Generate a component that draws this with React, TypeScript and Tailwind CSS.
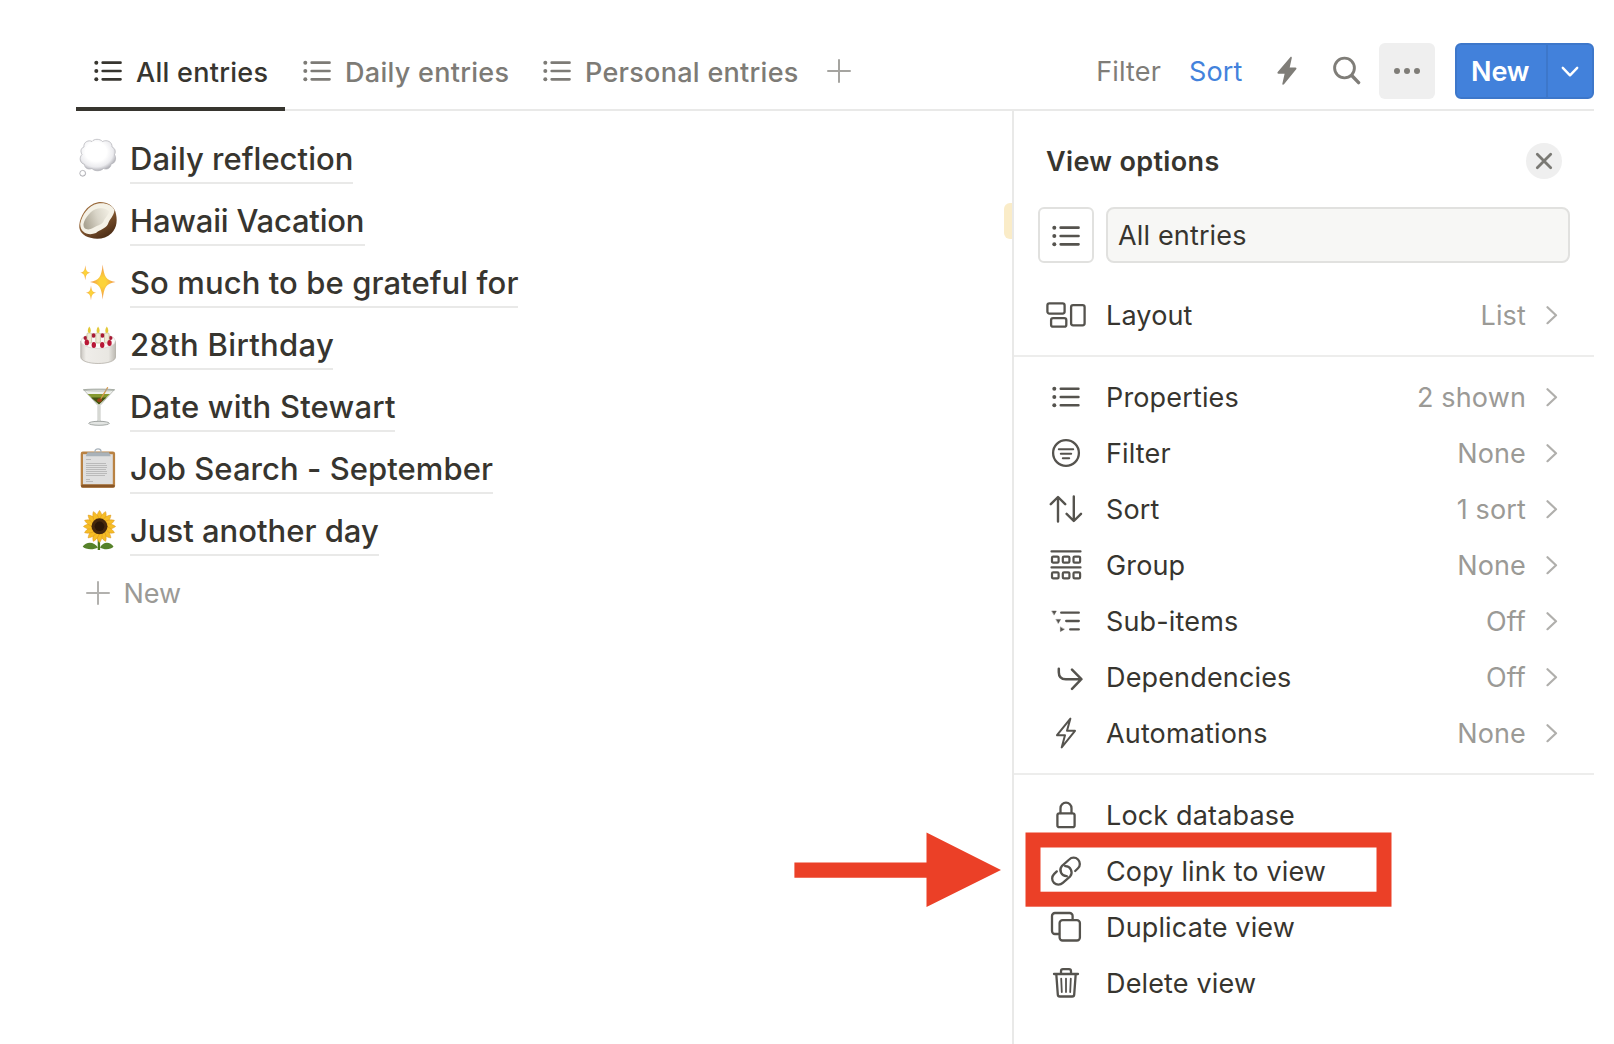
import type { ReactNode } from "react";

/* ---------- line icons ---------- */

function ListIcon({ weight = 2.7 }: { weight?: number }) {
  return (
    <svg width="28" height="28" viewBox="0 0 28 28" fill="none" stroke="currentColor" strokeWidth={weight} strokeLinecap="round">
      <path d="M8.7 5.7H26.5M8.7 14H26.5M8.7 22.3H26.5" />
      <g fill="currentColor" stroke="none">
        <circle cx="2.3" cy="5.7" r="2" />
        <circle cx="2.3" cy="14" r="2" />
        <circle cx="2.3" cy="22.3" r="2" />
      </g>
    </svg>
  );
}

function PlusIcon() {
  return (
    <svg width="24" height="24" viewBox="0 0 24 24" fill="none" stroke="currentColor" strokeWidth="2" strokeLinecap="round">
      <path d="M12 1v22M1 12h22" />
    </svg>
  );
}

function ChevronRight() {
  return (
    <svg width="12" height="20" viewBox="0 0 12 20" fill="none" stroke="#b0afac" strokeWidth="2.2" strokeLinecap="round" strokeLinejoin="round">
      <path d="M1.5 2.2 10 10.2 1.5 18.2" />
    </svg>
  );
}

function PanelIcon({ w = 32, children }: { w?: number; children: ReactNode }) {
  return (
    <svg width={w} height="32" viewBox={`0 0 ${w} 32`} fill="none" stroke="#55534e" strokeWidth="2.3" strokeLinecap="round" strokeLinejoin="round">
      {children}
    </svg>
  );
}

const layoutIcon = (
  <PanelIcon w={40}>
    <rect x="1.4" y="4.4" width="17.2" height="10.2" rx="2" />
    <rect x="5.1" y="19.1" width="15.2" height="8.6" rx="2" />
    <rect x="25.1" y="6.1" width="13.5" height="20.2" rx="2" />
  </PanelIcon>
);

const propertiesIcon = (
  <span className="text-[#55534e]">
    <ListIcon weight={2.4} />
  </span>
);

const filterIcon = (
  <PanelIcon>
    <circle cx="16" cy="16" r="12.9" />
    <path strokeWidth="2" d="M8.8 12.2h14.4M10.8 16.7h10.4M12.8 21.2h6.4" />
  </PanelIcon>
);

const sortIcon = (
  <PanelIcon w={34}>
    <path strokeWidth="2.4" d="M9 28.5V4.5M1.8 11.2 9 4 16.2 11.2M24.8 3.5v24M17.6 20.8 24.8 28 32 20.8" />
  </PanelIcon>
);

const groupIcon = (
  <PanelIcon>
    <g strokeWidth="2.2">
      <path d="M1.5 2.4h29M1.5 18.4h29" />
      <rect x="2" y="7.6" width="6.6" height="6" rx="1.2" />
      <rect x="12.8" y="7.6" width="6.6" height="6" rx="1.2" />
      <rect x="23.5" y="7.6" width="6.6" height="6" rx="1.2" />
      <rect x="2" y="23.4" width="6.6" height="6" rx="1.2" />
      <rect x="12.8" y="23.4" width="6.6" height="6" rx="1.2" />
      <rect x="23.5" y="23.4" width="6.6" height="6" rx="1.2" />
    </g>
  </PanelIcon>
);

const subItemsIcon = (
  <PanelIcon>
    <path d="M11.2 7.7h17.6M16.2 16h12.6M20.2 24.4h8.6" />
    <g fill="#55534e" stroke="#55534e" strokeWidth="0.4">
      <path d="M2 6h4.4L4.2 9.8Z" />
      <path d="M6.2 14.4h4.4L8.4 18.2Z" />
      <path d="M10.4 22.2v4.4L14.2 24.4Z" />
    </g>
  </PanelIcon>
);

const dependenciesIcon = (
  <PanelIcon w={34}>
    <path strokeWidth="2.5" d="M9.8 7.8v3.4c0 4.6 2.8 7 7 7h15.4M23 8.6 32.4 18.2 23 27.8" />
  </PanelIcon>
);

const automationsIcon = (
  <PanelIcon>
    <path strokeWidth="2" d="M20.4 1.6 7 18.2h8L11.7 30.4 25 13.8h-8Z" />
  </PanelIcon>
);

const lockIcon = (
  <PanelIcon>
    <rect x="7.4" y="14.3" width="17.2" height="13.9" rx="2" />
    <path d="M10.5 14V9.2a5.5 5.5 0 0 1 11 0V14" />
  </PanelIcon>
);

const linkIcon = (
  <PanelIcon>
    <path d="M16.8 21.2A6.2 6.2 0 0 1 11.8 11.1L19.2 4.5A6.2 6.2 0 0 1 28 13.3L25.2 16M15.2 11.2A6.2 6.2 0 0 1 20.2 21.3L12.8 27.9A6.2 6.2 0 0 1 4 19.1L6.8 16.4" />
  </PanelIcon>
);

const duplicateIcon = (
  <PanelIcon>
    <rect x="9.6" y="9.1" width="20.3" height="20.4" rx="3" />
    <path d="M9 23H5a3 3 0 0 1-3-3V5a3 3 0 0 1 3-3h14.6a3 3 0 0 1 3 3v3.6" />
  </PanelIcon>
);

const trashIcon = (
  <PanelIcon>
    <path d="M4 7h24M6.3 7.2 7.8 27.6a2 2 0 0 0 2 1.9h12.4a2 2 0 0 0 2-1.9L25.7 7.2M11 6.6V4.2a2 2 0 0 1 2-2h6a2 2 0 0 1 2 2v2.4" />
    <path strokeWidth="1.8" d="M11.2 11.6l.6 13.4M16 11.6V25M20.8 11.6 20.2 25" />
  </PanelIcon>
);

/* ---------- emoji drawings, all on a 40 x 40 grid ---------- */

function Emoji({ children }: { children: ReactNode }) {
  return (
    <svg width="40" height="40" viewBox="0 0 40 40" className="mt-2.5 ml-0.5 shrink-0">
      {children}
    </svg>
  );
}

const thought = (
  <Emoji>
    <defs>
      <radialGradient id="cloud" cx="0.45" cy="0.4" r="0.6">
        <stop offset="0.5" stopColor="#ffffff" />
        <stop offset="0.8" stopColor="#ececef" />
        <stop offset="1" stopColor="#b4b4ba" />
      </radialGradient>
    </defs>
    <path
      d="M6 9C5 4 11 1.5 14 3.5 16 .6 22 .6 24.5 3.5 29 1.2 34.5 4 34 9c3.5 1.5 4 5 2.5 7.500C39 21 37 25.500 33 26c0 4-4 6-7.500 4.500-3 3-9 3-11.500 0C10 32 6.500 30 6.500 26.500 1.500 25 1 19.500 4 16.500 2 13 3 10 6 9Z"
      fill="url(#cloud)"
      stroke="#b0b0b6"
      strokeWidth="0.7"
    />
    <circle cx="4.7" cy="35.3" r="2.9" fill="url(#cloud)" stroke="#a9a9ae" strokeWidth="0.8" />
  </Emoji>
);

const coconut = (
  <Emoji>
    <defs>
      <linearGradient id="husk" x1="0" y1="0" x2="0.6" y2="1">
        <stop offset="0.4" stopColor="#9a6a3c" />
        <stop offset="1" stopColor="#4f2f17" />
      </linearGradient>
      <linearGradient id="flesh" x1="0" y1="0.6" x2="1" y2="0.3">
        <stop offset="0" stopColor="#aaa493" />
        <stop offset="0.55" stopColor="#d9d5c8" />
        <stop offset="1" stopColor="#eeebe0" />
      </linearGradient>
    </defs>
    <path d="M1.3 25C2 17 8 4.5 20 2.2c8-1 15 3 17.3 9 2.4 8 2 16.5-3.8 22C28 38.5 20 40 12.5 37.8 5 36 .6 31 1.3 25Z" fill="url(#husk)" />
    <path d="M2.2 24C4 15 10 5.5 20 3.5c7.500-1 14 1.500 16.500 6.500-.5 6-5 9-6.500 14-2.500 5-8 5.500-12 9C10.500 36 2.200 33 2.200 24Z" fill="#f4f1e6" />
    <path d="M5.500 24C7 17.500 13 9.800 20 8.400c5.500-.9 9.500.5 11 3.100-.5 4-4 6-5.500 10-2 3.500-7 4-10.500 6.500C11 30.500 5 30 5.500 24Z" fill="url(#flesh)" />
  </Emoji>
);

const sparkles = (
  <Emoji>
    <defs>
      <radialGradient id="spark">
        <stop offset="0.25" stopColor="#fcd33a" />
        <stop offset="1" stopColor="#f0914a" />
      </radialGradient>
    </defs>
    <g fill="url(#spark)">
      <path d="M24.7 2.5C26 14.5 28 18.5 37.5 20 28 21.5 26 25.5 24.7 37.5 23.4 25.5 21.4 21.5 12 20 21.4 18.5 23.4 14.5 24.7 2.5Z" />
      <path d="M7.3 3.2C7.9 8.2 8.6 10 12.5 10.7 8.6 11.4 7.9 13.2 7.3 18.2 6.7 13.2 6 11.4 2.2 10.7 6 10 6.7 8.2 7.3 3.2Z" />
      <path d="M13 23.5C13.6 28.3 14.3 30 18.2 30.8 14.3 31.5 13.6 33.3 13 38.2 12.4 33.3 11.7 31.5 7.8 30.8 11.7 30 12.4 28.3 13 23.5Z" />
    </g>
  </Emoji>
);

const cake = (
  <Emoji>
    <defs>
      <linearGradient id="cakeSide" x1="0" x2="1">
        <stop offset="0" stopColor="#c9c6c0" />
        <stop offset="0.15" stopColor="#efede9" />
        <stop offset="0.8" stopColor="#e9e7e2" />
        <stop offset="1" stopColor="#bdbab3" />
      </linearGradient>
    </defs>
    <path d="M2.8 17v16c0 4 8 6.5 17.4 6.5S37.5 37 37.5 33V17Z" fill="url(#cakeSide)" stroke="#aaa69e" strokeWidth="0.7" />
    <ellipse cx="20.2" cy="17" rx="17.2" ry="7.5" fill="#fbfaf8" stroke="#d0cdc7" strokeWidth="0.6" />
    <g fill="#a81a35">
      <circle cx="7.5" cy="14" r="2" />
      <circle cx="15.6" cy="11.5" r="2.2" />
      <circle cx="24.4" cy="11.5" r="2.2" />
      <circle cx="32.5" cy="14" r="2" />
    </g>
    <g fill="#f0ead8" stroke="#bdb18c" strokeWidth="0.6">
      <rect x="9" y="9" width="4.6" height="10" rx="1" />
      <rect x="17.8" y="9" width="4.6" height="10" rx="1" />
      <rect x="26.5" y="9" width="4.6" height="10" rx="1" />
    </g>
    <g fill="#e3c938">
      <path d="M11.3 2.5c1.6 2.2 2.4 6 0 6.5-2.4-.5-1.6-4.3 0-6.5Z" />
      <path d="M20.1 2.5c1.6 2.2 2.4 6 0 6.5-2.4-.5-1.6-4.3 0-6.5Z" />
      <path d="M28.8 2.5c1.6 2.2 2.4 6 0 6.5-2.4-.5-1.6-4.3 0-6.5Z" />
    </g>
    <g fill="#b81836">
      <ellipse cx="8.8" cy="18.4" rx="2.2" ry="2.9" />
      <ellipse cx="15.8" cy="21" rx="2.2" ry="2.9" />
      <ellipse cx="24.2" cy="21" rx="2.2" ry="2.9" />
      <ellipse cx="31.5" cy="19" rx="2.2" ry="2.9" />
    </g>
  </Emoji>
);

const martini = (
  <Emoji>
    <path d="M5.5 3.5h31L22 19.5v14.500c0 1.500 2 2 6 2.600H14.500c4-.6 5.500-1.100 5.500-2.600V19.500Z" fill="#eef0ec" stroke="#a9ada7" strokeWidth="0.7" />
    <path d="M9.5 8h22.5L21 18.6Z" fill="#84992f" />
    <path d="M13 11.5h15.5L21 18.6Z" fill="#435512" />
    <path d="M29.6 1.7 21.5 15" stroke="#d99a4b" strokeWidth="1.3" strokeLinecap="round" />
    <ellipse cx="21.5" cy="14.3" rx="2.4" ry="2" fill="#9a4317" />
    <ellipse cx="21" cy="4" rx="15.5" ry="1" fill="none" stroke="#9fa59c" strokeWidth="0.7" />
    <ellipse cx="21" cy="37.3" rx="10.3" ry="2" fill="#e3e5e3" stroke="#8f9492" strokeWidth="0.8" />
  </Emoji>
);

const clipboard = (
  <Emoji>
    <rect x="2.7" y="3.5" width="34.4" height="36.2" rx="2.2" fill="#b98243" />
    <rect x="3" y="36.4" width="33.8" height="3.2" rx="1.6" fill="#8a5727" />
    <rect x="5" y="6.2" width="29.8" height="30" fill="#dfdfdf" />
    <path stroke="#bababa" d="M8 11.5h5M8 15.5h20M8 17.5h21M8 19.5h21M8 21.5h20M8 23.5h21M8 25.5h21M8 27.5h19M8 31.5h4M8 33.5h7" />
    <path d="M17 4.5V3.2c0-3 6-3 6 0v1.3" fill="none" stroke="#a9b3bb" strokeWidth="1.3" />
    <path d="M9.5 4.3h21.5l1.8 4H7.7Z" fill="#a9b2b9" />
  </Emoji>
);

const sunflower = (
  <Emoji>
    <path d="M19.7 28h2.4v12h-2.4Z" fill="#4d7a1d" />
    <path d="M20 37.5C15 40.5 7 39.5 4.7 36.5 8 31.5 16 31 20 37.5ZM22 37.5C26.5 40.5 33.5 39.5 35.5 36.5 32.5 31.5 25 31 22 37.5Z" fill="#56822a" />
    <g fill="#f6bd25" stroke="#dc941a" strokeWidth="0.5">
      {Array.from({ length: 16 }, (_, i) => (
        <path key={i} d="M21.5 16.5C17.5 10 18.5 4 21.5.4 24.5 4 25.5 10 21.5 16.5Z" transform={`rotate(${i * 22.5} 21.5 16.5)`} />
      ))}
    </g>
    <circle cx="21.5" cy="16.3" r="8" fill="#45280d" />
    <circle cx="21.5" cy="16.3" r="4.8" fill="#2b1707" />
  </Emoji>
);

/* ---------- data ---------- */

const entries: { icon: ReactNode; title: string; cls: string }[] = [
  { icon: thought, title: "Daily reflection", cls: "w-[223px] tracking-[0.03px]" },
  { icon: coconut, title: "Hawaii Vacation", cls: "w-[235px] tracking-[-0.2px]" },
  { icon: sparkles, title: "So much to be grateful for", cls: "w-[388px] tracking-[0.09px]" },
  { icon: cake, title: "28th Birthday", cls: "w-[203px] tracking-[0.3px]" },
  { icon: martini, title: "Date with Stewart", cls: "w-[265px] tracking-[0.22px]" },
  { icon: clipboard, title: "Job Search - September", cls: "w-[363px] tracking-[0.06px]" },
  { icon: sunflower, title: "Just another day", cls: "w-[249px] tracking-normal" },
];

const settings = [
  { icon: propertiesIcon, label: "Properties", value: "2 shown" },
  { icon: filterIcon, label: "Filter", value: "None" },
  { icon: sortIcon, label: "Sort", value: "1 sort" },
  { icon: groupIcon, label: "Group", value: "None" },
  { icon: subItemsIcon, label: "Sub-items", value: "Off" },
  { icon: dependenciesIcon, label: "Dependencies", value: "Off" },
  { icon: automationsIcon, label: "Automations", value: "None" },
];

/* ---------- parts ---------- */

function Row({ icon, label, value }: { icon: ReactNode; label: string; value?: string }) {
  return (
    <div className="flex h-14 items-center pr-9">
      <span className="ml-8 flex w-10 shrink-0 items-center justify-center">{icon}</span>
      <span className="ml-5 flex-1 whitespace-nowrap">{label}</span>
      {value && (
        <>
          <span className="mr-5 text-[#9b9a96]">{value}</span>
          <ChevronRight />
        </>
      )}
    </div>
  );
}

function Tab({ label, active, className }: { label: string; active?: boolean; className: string }) {
  return (
    <div className={`flex h-full items-start pl-[18px] font-medium tracking-[0.28px] ${active ? "border-b-4 border-[#37352f] text-[#37352f]" : "text-[#7d7b76]"} ${className}`}>
      <span className="mt-3.5 shrink-0">
        <ListIcon />
      </span>
      <span className="ml-3.5 leading-[59px] whitespace-nowrap">{label}</span>
    </div>
  );
}

export default function App() {
  return (
    <div className="relative h-[1044px] w-[1614px] overflow-hidden bg-white pt-[43px] pr-5 pl-[76px] font-['Inter',sans-serif] text-[27px] leading-none tracking-[0.15px] text-[#37352f]">
      <header className="flex h-[68px] items-start justify-between shadow-[inset_0_-2px_0_#e9e9e8]">
        <nav className="flex h-[68px]">
          <Tab label="All entries" active className="w-[209px]" />
          <Tab label="Daily entries" className="w-[240px]" />
          <Tab label="Personal entries" className="w-[272px]" />
          <span className="mt-4 ml-[30px] text-[#a5a4a0]">
            <PlusIcon />
          </span>
        </nav>
        <div className="flex h-14 items-center text-[#7f7d78]">
          <span>Filter</span>
          <span className="ml-7 text-[#4382dc]">Sort</span>
          <svg width="20" height="30" viewBox="0 0 20 30" className="ml-[34.5px]" fill="currentColor">
            <path d="M13.3 1.3c.5-1 1.7-.4 1.5.6L12.7 11.6h5.7c1 0 1.4.9.8 1.7L7 28.2c-.8.9-1.9.4-1.6-.8L7.6 17.7H1.5c-1 0-1.4-.9-.8-1.7Z" />
          </svg>
          <svg width="28" height="30" viewBox="0 0 28 30" className="ml-9" fill="none" stroke="currentColor" strokeWidth="2.9" strokeLinecap="round">
            <circle cx="11.5" cy="12" r="9.9" />
            <path strokeWidth="3.4" d="M19 19.8 25.6 26.6" />
          </svg>
          <span className="ml-[18px] flex size-14 items-center justify-center gap-[4.4px] rounded-md bg-[#efefef]">
            <i className="size-[6px] rounded-full bg-[#7f7d78]" />
            <i className="size-[6px] rounded-full bg-[#7f7d78]" />
            <i className="size-[6px] rounded-full bg-[#7f7d78]" />
          </span>
          <span className="ml-5 flex h-14 w-[139px] items-stretch rounded-md border-2 border-[#3d77ca] bg-[#4281db] text-white">
            <span className="flex w-[91px] items-center border-r-2 border-[#3d77ca] pl-3.5 font-semibold tracking-[-0.1px]">New</span>
            <span className="flex flex-1 items-center justify-center pt-0.5">
              <svg width="18" height="12" viewBox="0 0 18 12" fill="none" stroke="currentColor" strokeWidth="2.4" strokeLinecap="round" strokeLinejoin="round">
                <path d="M1.8 1.8 9 9.3 16.2 1.8" />
              </svg>
            </span>
          </span>
        </div>
      </header>

      <div className="flex">
        <main className="relative h-[933px] w-[936px] pt-[17px]">
          {entries.map((e) => (
            <div key={e.title} className="flex h-[62px] items-start">
              {e.icon}
              <span className={`mt-[7px] ml-3 h-[49px] border-b-2 border-[#e9e9e8] text-[31px] leading-[47px] font-medium whitespace-nowrap ${e.cls}`}>
                {e.title}
              </span>
            </div>
          ))}
          <div className="flex h-[62px] items-center pl-2.5 text-[#9b9a96]">
            <span className="text-[#b2b1ae]">
              <PlusIcon />
            </span>
            <span className="ml-[13.5px] tracking-normal">New</span>
          </div>
          <span className="absolute top-[92px] right-0 h-9 w-2 rounded-l-md bg-[#faecc8]" />
        </main>

        <aside className="h-[933px] w-[582px] border-l-2 border-[#e9e9e8]">
          <div className="mt-8 flex h-9 items-center justify-between pr-8 pl-8">
            <h2 className="font-semibold tracking-[0.35px]">View options</h2>
            <span className="flex size-9 items-center justify-center rounded-full bg-[#efefef]">
              <svg width="18" height="18" viewBox="0 0 18 18" stroke="#7a7974" strokeWidth="2.8" strokeLinecap="round">
                <path d="M2.3 2.3 15.7 15.7M15.7 2.3 2.3 15.7" />
              </svg>
            </span>
          </div>
          <div className="mt-7 flex h-14 gap-3 pr-6 pl-6">
            <span className="flex size-14 items-center justify-center rounded-md border-2 border-[#e1e1df] pt-px text-[#55534e]">
              <ListIcon />
            </span>
            <span className="flex flex-1 items-center rounded-lg border-2 border-[#e1e1df] bg-[#f7f7f5] pl-2.5">All entries</span>
          </div>
          <div className="mt-6 border-b-2 border-[#ededec] pb-3">
            <Row icon={layoutIcon} label="Layout" value="List" />
          </div>
          <div className="border-b-2 border-[#ededec] py-3">
            {settings.map((s) => (
              <Row key={s.label} icon={s.icon} label={s.label} value={s.value} />
            ))}
          </div>
          <div className="pt-3">
            <Row icon={lockIcon} label="Lock database" />
            <Row icon={linkIcon} label="Copy link to view" />
            <Row icon={duplicateIcon} label="Duplicate view" />
            <Row icon={trashIcon} label="Delete view" />
          </div>
        </aside>
      </div>

      {/* callout: arrow and frame over the menu */}
      <svg className="absolute top-[832px] left-[794px]" width="208" height="76" viewBox="0 0 208 76" fill="#eb4027">
        <path d="M.4 30.4H132.5V.6L207 38 132.5 75V45.7H.4Z" />
      </svg>
      <svg className="absolute top-[832px] left-[1025px]" width="368" height="76" viewBox="0 0 368 76" fill="none" stroke="#eb4027" strokeWidth="15">
        <rect x="8" y="8" width="351" height="59.2" />
      </svg>
    </div>
  );
}
